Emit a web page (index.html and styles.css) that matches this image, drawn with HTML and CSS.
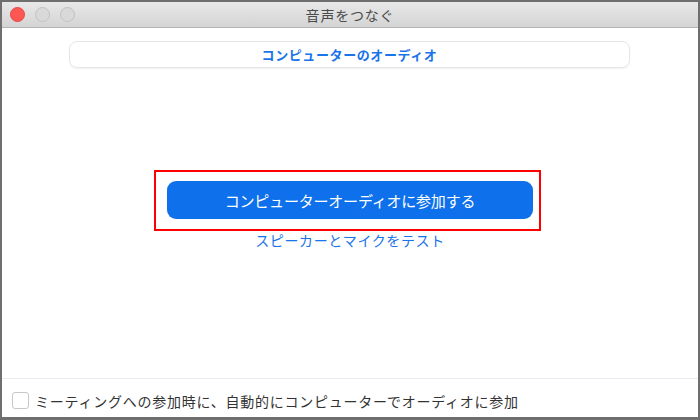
FILE: index.html
```html
<!DOCTYPE html>
<html lang="ja">
<head>
    <meta charset="UTF-8">
    <title>音声をつなぐ</title>
    <link rel="stylesheet" href="styles.css">
</head>
<body>
    <div class="window">
        <div class="titlebar">
            <div class="lights">
                <span class="light close"></span>
                <span class="light"></span>
                <span class="light"></span>
            </div>
            <div class="title">音声をつなぐ</div>
        </div>
        <div class="content">
            <div class="tabs">
                <div class="tab">コンピューターのオーディオ</div>
            </div>
            <div class="center">
                <div class="highlight">
                    <button class="join">コンピューターオーディオに参加する</button>
                </div>
                <a class="test-link" href="#">スピーカーとマイクをテスト</a>
            </div>
        </div>
        <div class="footer">
            <span class="checkbox"></span>
            <span class="label">ミーティングへの参加時に、自動的にコンピューターでオーディオに参加</span>
        </div>
    </div>
</body>
</html>
```

FILE: styles.css
```css
body {
    margin: 0;
    padding: 0;
    background: #6f6f6f;
    font-family: "Noto Sans CJK JP", "Noto Sans", sans-serif;
}

.window {
    box-sizing: border-box;
    width: 700px;
    height: 420px;
    border: 2px solid #6f6f6f;
    border-bottom-width: 3px;
    background: #ffffff;
    display: flex;
    flex-direction: column;
}

.titlebar {
    position: relative;
    height: 25px;
    background: linear-gradient(#e8e8e8, #d4d4d4);
    border-bottom: 1px solid #b3b3b3;
    display: flex;
    align-items: center;
    justify-content: center;
}

.lights {
    position: absolute;
    left: 8px;
    top: 5px;
    display: flex;
    gap: 10px;
}

.light {
    width: 13px;
    height: 13px;
    border-radius: 50%;
    background: #d9d9d9;
    border: 1px solid #c2c2c2;
}

.light.close {
    background: #fc5753;
    border-color: #e54640;
}

.title {
    font-size: 14px;
    letter-spacing: 0.8px;
    color: #4a4a4a;
}

.content {
    flex: 1;
    display: flex;
    flex-direction: column;
    align-items: center;
}

.tabs {
    margin-top: 13px;
    width: 561px;
    height: 27px;
    margin-left: -1px;
    box-sizing: border-box;
    border: 1px solid #e6e6ea;
    border-radius: 8px;
    box-shadow: 0 1px 2px rgba(0, 0, 0, 0.06);
    display: flex;
    align-items: center;
    justify-content: center;
}

.tab {
    font-size: 13px;
    font-weight: 700;
    letter-spacing: 0.6px;
    color: #1a73e8;
}

.center {
    margin-top: 102px;
    display: flex;
    flex-direction: column;
    align-items: center;
}

.highlight {
    border: 2px solid #ff0000;
    padding: 9px 6px 10px 11px;
    margin-left: -5px;
}

.join {
    display: block;
    width: 366px;
    height: 38px;
    border: none;
    border-radius: 9px;
    background: #0e71eb;
    color: #ffffff;
    font-family: inherit;
    font-size: 15px;
    letter-spacing: -0.2px;
    cursor: pointer;
}

.test-link {
    margin-top: -1px;
    font-size: 14px;
    letter-spacing: 0.6px;
    color: #1a73e8;
    text-decoration: none;
}

.footer {
    height: 39px;
    box-sizing: border-box;
    padding-top: 5px;
    border-top: 1px solid #e9e9ef;
    display: flex;
    align-items: center;
    padding-left: 10px;
    gap: 6px;
}

.checkbox {
    width: 15px;
    height: 15px;
    border: 1px solid #c8c8c8;
    border-radius: 3px;
    background: #ffffff;
}

.label {
    font-size: 14px;
    letter-spacing: 0.75px;
    color: #333333;
}
```
